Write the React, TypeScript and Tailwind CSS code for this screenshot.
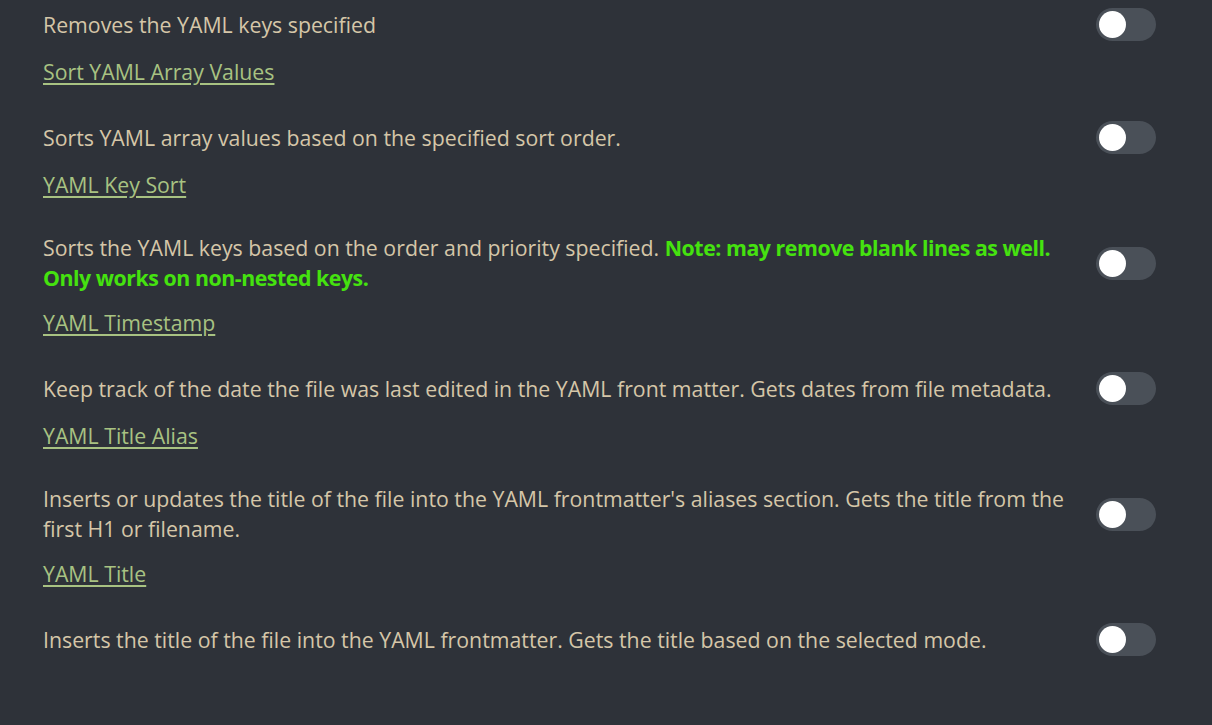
import React from "react";

function Toggle() {
  return (
    <div className="w-[60px] h-[33px] my-[1px] shrink-0 rounded-full bg-[#4a5058] flex items-center px-[3px]">
      <div className="w-[27px] h-[27px] rounded-full bg-white" />
    </div>
  );
}

function DescRow({ children }: { children: React.ReactNode }) {
  return (
    <div className="flex items-center justify-between gap-6">
      <div className="w-[1030px] text-[#d5c6a8] leading-[30px]">{children}</div>
      <Toggle />
    </div>
  );
}

function Link({ children }: { children: React.ReactNode }) {
  return (
    <div className="mt-[15px] mb-[33px] leading-[30px]">
      <a className="text-[#a8c282] underline underline-offset-[3px] decoration-[1.5px]">{children}</a>
    </div>
  );
}

export default function App() {
  const note = "text-[#45e20f] font-bold tracking-[-0.45px]";
  return (
    <div
      className="w-[1212px] h-[725px] bg-[#2e3239] pl-[43px] pr-[56px] pt-[7px] text-[21.3px]"
      style={{ fontFamily: '"Open Sans", "Noto Sans", sans-serif' }}
    >
      <DescRow>Removes the YAML keys specified</DescRow>
      <Link>Sort YAML Array Values</Link>
      <DescRow>Sorts YAML array values based on the specified sort order.</DescRow>
      <Link>YAML Key Sort</Link>
      <DescRow>
        Sorts the YAML keys based on the order and priority specified.{" "}
        <span className={note}>Note: may remove blank lines as well. Only works on non-nested keys.</span>
      </DescRow>
      <Link>YAML Timestamp</Link>
      <DescRow>
        Keep track of the date the file was last edited in the YAML front matter. Gets dates from file metadata.
      </DescRow>
      <Link>YAML Title Alias</Link>
      <DescRow>
        Inserts or updates the title of the file into the YAML frontmatter's aliases section. Gets the title from the
        first H1 or filename.
      </DescRow>
      <Link>YAML Title</Link>
      <DescRow>Inserts the title of the file into the YAML frontmatter. Gets the title based on the selected mode.</DescRow>
    </div>
  );
}
